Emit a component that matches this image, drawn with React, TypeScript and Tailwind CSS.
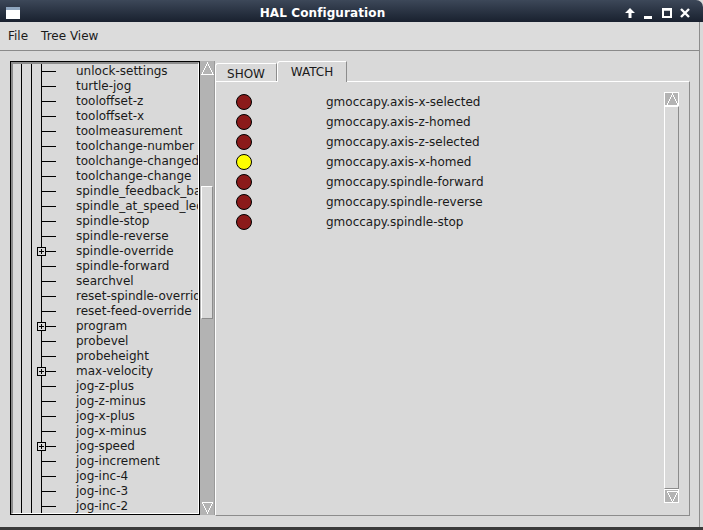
import React from "react";

type TreeRow = { name: string; expandable?: boolean };

const TREE_ROWS: TreeRow[] = [
  { name: "unlock-settings" },
  { name: "turtle-jog" },
  { name: "tooloffset-z" },
  { name: "tooloffset-x" },
  { name: "toolmeasurement" },
  { name: "toolchange-number" },
  { name: "toolchange-changed" },
  { name: "toolchange-change" },
  { name: "spindle_feedback_bar" },
  { name: "spindle_at_speed_led" },
  { name: "spindle-stop" },
  { name: "spindle-reverse" },
  { name: "spindle-override", expandable: true },
  { name: "spindle-forward" },
  { name: "searchvel" },
  { name: "reset-spindle-override" },
  { name: "reset-feed-override" },
  { name: "program", expandable: true },
  { name: "probevel" },
  { name: "probeheight" },
  { name: "max-velocity", expandable: true },
  { name: "jog-z-plus" },
  { name: "jog-z-minus" },
  { name: "jog-x-plus" },
  { name: "jog-x-minus" },
  { name: "jog-speed", expandable: true },
  { name: "jog-increment" },
  { name: "jog-inc-4" },
  { name: "jog-inc-3" },
  { name: "jog-inc-2" },
];

const WATCH = [
  { pin: "gmoccapy.axis-x-selected", on: false },
  { pin: "gmoccapy.axis-z-homed", on: false },
  { pin: "gmoccapy.axis-z-selected", on: false },
  { pin: "gmoccapy.axis-x-homed", on: true },
  { pin: "gmoccapy.spindle-forward", on: false },
  { pin: "gmoccapy.spindle-reverse", on: false },
  { pin: "gmoccapy.spindle-stop", on: false },
];

// tree connector lines drawn per row
function Gutter({ expandable }: { expandable?: boolean }) {
  return (
    <svg width="63" height="15" className="shrink-0" shapeRendering="crispEdges">
      <line x1="8.5" y1="0" x2="8.5" y2="15" stroke="#000" />
      <line x1="18.5" y1="0" x2="18.5" y2="15" stroke="#000" />
      <line x1="28.5" y1="0" x2="28.5" y2="15" stroke="#000" />
      <line x1="29" y1="7.5" x2="43" y2="7.5" stroke="#000" />
      {expandable && (
        <>
          <rect x="24.5" y="3.5" width="8" height="8" fill="#d9d9d9" stroke="#000" />
          <line x1="26" y1="7.5" x2="31" y2="7.5" stroke="#000" />
          <line x1="28.5" y1="5" x2="28.5" y2="10" stroke="#000" />
        </>
      )}
    </svg>
  );
}

function ArrowUp({ className }: { className?: string }) {
  return (
    <div className={className}>
      <svg width="13" height="13" shapeRendering="crispEdges">
        <path d="M6.5 1 L12 12 L1 12 Z" fill="none" stroke="#fff" strokeWidth="1" />
      </svg>
    </div>
  );
}

function ArrowDown({ className }: { className?: string }) {
  return (
    <div className={className}>
      <svg width="13" height="13" shapeRendering="crispEdges">
        <path d="M1 1 L12 1 L6.5 12 Z" fill="none" stroke="#fff" strokeWidth="1" />
      </svg>
    </div>
  );
}

function TitleBar() {
  return (
    <div className="flex h-[22px] pt-[3px] items-center bg-linear-to-b from-[#3d4859] to-[#19212f] rounded-tr-[7px] text-white">
      <div className="ml-[6px] h-[12px] w-[14px] bg-white border-t-[3px] border-[#8fa6bf]" />
      <div className="flex-1 text-center text-[12px] font-bold tracking-[0.1px]">HAL Configuration</div>
      <div className="flex items-center mr-[13px] gap-0">
        <svg width="10" height="10" viewBox="0 0 10 10" className="mr-[9px]">
          <path d="M5 0 L10 5 L6.5 5 L6.5 10 L3.5 10 L3.5 5 L0 5 Z" fill="#fff" />
        </svg>
        <svg width="8" height="10" viewBox="0 0 8 10" className="mr-[10px] mt-[4px]">
          <rect x="0" y="6" width="8" height="3" fill="#fff" />
        </svg>
        <svg width="10" height="10" viewBox="0 0 10 10" className="mr-[8px]">
          <rect x="1" y="1.5" width="8" height="7.5" fill="none" stroke="#fff" strokeWidth="2" />
          <rect x="0" y="0" width="10" height="2.5" fill="#fff" />
        </svg>
        <svg width="10" height="10" viewBox="0 0 10 10">
          <path d="M1 1 L9 9 M9 1 L1 9" stroke="#fff" strokeWidth="2.4" />
        </svg>
      </div>
    </div>
  );
}

export default function App() {
  return (
    <div
      className="w-[703px] h-[530px] overflow-hidden flex flex-col bg-[#d9d9d9] text-[#1a1a1a] text-[12px]"
      style={{ fontFamily: '"DejaVu Sans", "Liberation Sans", sans-serif' }}
    >
      <TitleBar />
      <div className="flex flex-1 min-h-0">
        <div className="w-[700px] flex flex-col border-r border-[#8c8c8c]">
          {/* Menu */}
          <div className="h-[29px] flex items-center gap-[13px] pl-[8px] bg-[#dcdcdc] border-b border-[#8a8a8a]">
            <span>File</span>
            <span>Tree View</span>
          </div>

          <div className="flex flex-1 pt-[10px] pl-[10px]">
            {/* Tree */}
            <div className="flex h-[454px]">
              <div className="w-[190px] h-full border border-black">
                <div className="h-full border-t-2 border-l-2 border-[#8c8c8c] border-r border-b border-r-white border-b-white overflow-hidden">
                  {TREE_ROWS.map((r) => (
                    <div key={r.name} className="flex h-[15px] items-center whitespace-nowrap leading-[15px]">
                      <Gutter expandable={r.expandable} />
                      <span>{r.name}</span>
                    </div>
                  ))}
                </div>
              </div>
              <div className="w-[15px] h-full flex flex-col bg-[#b3b3b3] border-r border-[#9a9a9a] pl-[1px] pt-[1px]">
                <ArrowUp className="h-[13px] w-[13px]" />
                <div className="h-[111px]" />
                <div className="h-[133px] w-[12px] bg-[#d9d9d9] border-t border-l border-white border-r border-b border-r-[#8c8c8c] border-b-[#8c8c8c]" />
                <div className="flex-1" />
                <ArrowDown className="h-[13px] w-[13px] mb-[1px]" />
              </div>
            </div>

            {/* Notebook */}
            <div className="w-[475px] h-[455px] flex flex-col">
              <div className="flex items-end h-[20px] pl-0">
                <div className="h-[18px] w-[62px] flex items-center justify-center border-t border-l border-white border-r border-r-[#8c8c8c] rounded-tl-[3px] pt-[2px]">
                  SHOW
                </div>
                <div className="relative z-10 -mb-px h-[21px] w-[70px] flex items-center justify-center bg-[#d9d9d9] border-t border-l border-white border-r border-r-[#8c8c8c] rounded-tl-[3px] pb-[1px]">
                  WATCH
                </div>
              </div>
              <div className="flex-1 flex border-t border-l border-white border-r border-b border-r-[#8c8c8c] border-b-[#8c8c8c] p-[10px] pb-[12px]">
                <div className="flex-1 pl-[10px]">
                  {WATCH.map((w) => (
                    <div key={w.pin} className="flex h-[20px] items-center">
                      <div className="w-[90px]">
                        <div
                          className={
                            w.on
                              ? "w-[16px] h-[16px] rounded-full border border-black bg-[#ffff00]"
                              : "w-[16px] h-[16px] rounded-full border border-black bg-[#8b1a1a]"
                          }
                        />
                      </div>
                      <span className="-mt-[1px]">{w.pin}</span>
                    </div>
                  ))}
                </div>
                <div className="w-[15px] h-full flex flex-col">
                  <ArrowUp className="h-[14px] w-[15px] bg-[#b3b3b3] border border-white pl-px" />
                  <div className="flex-1 bg-[#d9d9d9] border-t border-l border-white border-r border-b border-r-[#8c8c8c] border-b-[#8c8c8c]" />
                  <ArrowDown className="h-[14px] w-[15px] bg-[#b3b3b3] border border-white pl-px" />
                </div>
              </div>
            </div>
          </div>
        </div>
        <div className="flex-1" />
      </div>
      <div className="h-[3px] bg-[#3a3a3a]" />
    </div>
  );
}
